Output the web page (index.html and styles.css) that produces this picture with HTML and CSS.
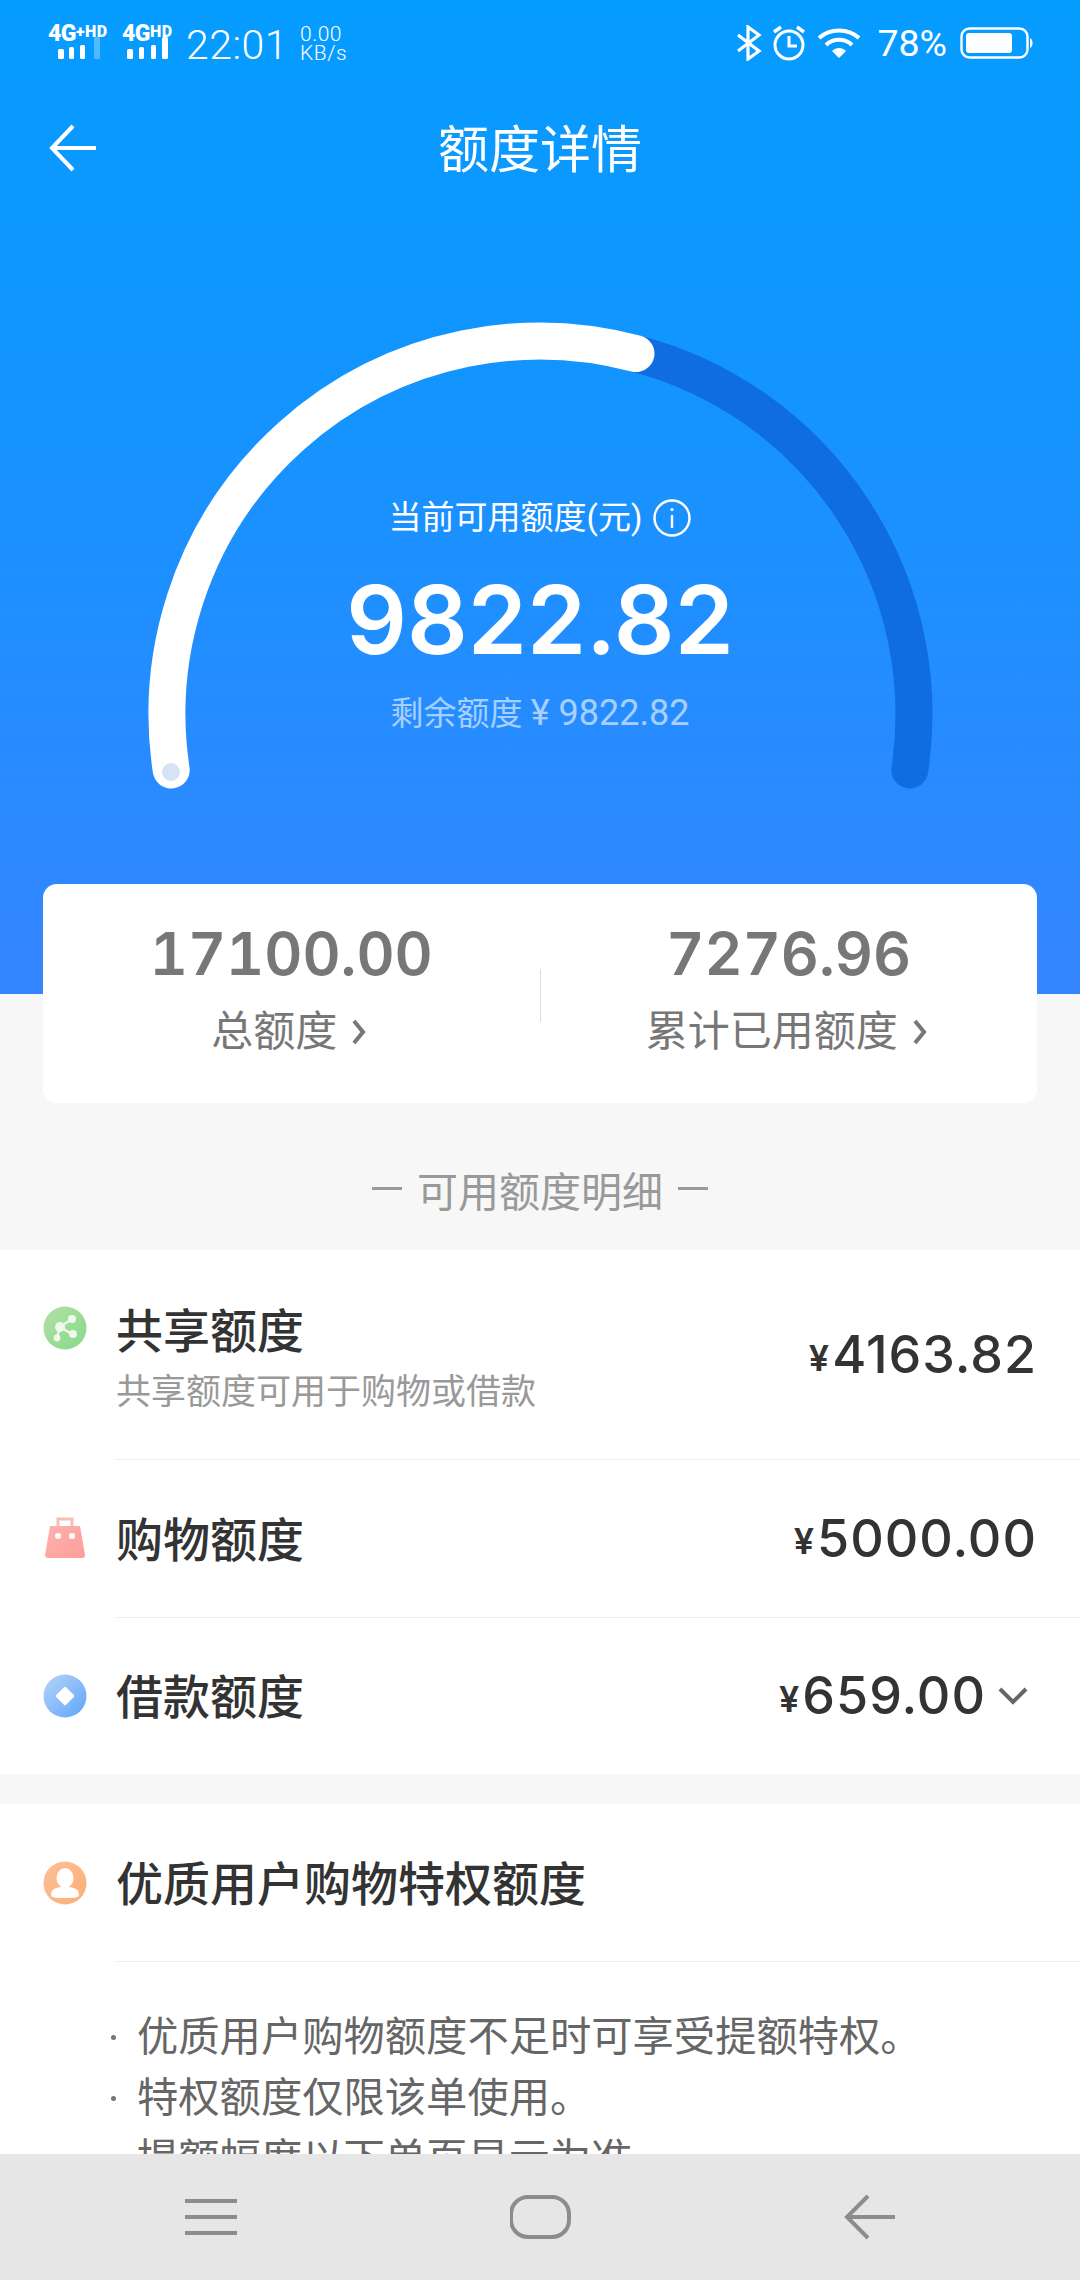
FILE: index.html
```html
<!DOCTYPE html>
<html lang="zh-CN">
<head>
    <meta charset="UTF-8">
    <meta name="viewport" content="width=device-width, initial-scale=1.0">
    <title>额度详情</title>
    <link rel="stylesheet" href="styles.css">
</head>
<body>
    <div class="screen">
        <div class="content">
            <section class="hero">
                <div class="statusbar">
                    <div class="sig sig-one">
                        <div class="sig-text">4G<small>+HD</small></div>
                        <svg class="sig-bars" width="44" height="22" viewBox="0 0 44 22">
                            <rect x="0" y="12" width="6" height="10" rx="1.5" fill="#fff"/>
                            <rect x="11" y="10" width="5" height="12" rx="1.5" fill="#fff"/>
                            <rect x="22" y="8" width="5" height="14" rx="1.5" fill="#fff"/>
                            <rect x="36" y="0" width="6" height="22" rx="1.5" fill="#fff" opacity="0.3"/>
                        </svg>
                    </div>
                    <div class="sig sig-two">
                        <div class="sig-text">4G<small>HD</small></div>
                        <svg class="sig-bars" width="42" height="22" viewBox="0 0 42 22">
                            <rect x="0" y="12" width="6" height="10" rx="1.5" fill="#fff"/>
                            <rect x="12" y="10" width="5" height="12" rx="1.5" fill="#fff"/>
                            <rect x="24" y="8" width="5" height="14" rx="1.5" fill="#fff"/>
                            <rect x="35" y="0" width="6" height="22" rx="1.5" fill="#fff"/>
                        </svg>
                    </div>
                    <span class="clock">22:01</span>
                    <div class="speed"><span>0.00</span><span>KB/s</span></div>
                    <div class="status-right">
                        <svg width="26" height="36" viewBox="0 0 26 36" fill="none" stroke="#fff" stroke-width="3.2">
                            <path d="M2 10 L23 26 L12 34 V2 L23 10 L2 26"/>
                        </svg>
                        <svg class="alarm" width="34" height="36" viewBox="0 0 34 36" fill="none" stroke="#fff" stroke-width="3">
                            <circle cx="17" cy="20" r="14"/>
                            <path d="M17 11 V21 H25"/>
                            <path d="M2 7 L9 2 M32 7 L25 2" stroke-width="3.4"/>
                        </svg>
                        <svg class="wifi" width="44" height="32" viewBox="0 0 44 32" fill="none" stroke="#fff" stroke-width="4">
                            <path d="M2 11 C13 1 31 1 42 11"/>
                            <path d="M9 18 C16 11 28 11 35 18"/>
                            <path d="M22 31 L15 24 C19 20 25 20 29 24 Z" fill="#fff" stroke="none"/>
                        </svg>
                        <span class="battery-text">78%</span>
                        <svg class="battery" width="73" height="32" viewBox="0 0 73 32">
                            <rect x="1.5" y="1.5" width="66" height="29" rx="8" fill="none" stroke="#fff" stroke-width="2.4"/>
                            <rect x="6" y="6" width="46" height="20" rx="3" fill="#fff"/>
                            <path d="M70 11 C72 12 72.5 14 72.5 16 C72.5 18 72 20 70 21 Z" fill="#fff"/>
                        </svg>
                    </div>
                </div>
                <header class="titlebar">
                    <svg class="back" width="48" height="48" viewBox="0 0 48 48" fill="none" stroke="#fff" stroke-width="4">
                        <path d="M24 2 L3 24 L24 46 M3 24 H47"/>
                    </svg>
                    <h1>额度详情</h1>
                </header>
                <div class="gauge">
                    <svg class="gauge-arc" width="820" height="500" viewBox="130 300 820 500" fill="none" stroke-width="37" stroke-linecap="round">
                        <path d="M636 353.6 A373 373 0 0 1 909.8 770" stroke="#0f6de0"/>
                        <path d="M171.2 770 A373 373 0 0 1 636 353.6" stroke="#fff"/>
                        <circle cx="171" cy="772" r="9" fill="#d5e3f2" stroke="none"/>
                    </svg>
                    <div class="gauge-label">
                        当前可用额度(元)
                        <svg width="38" height="38" viewBox="0 0 38 38" fill="none" stroke="#fff" stroke-width="2.4">
                            <circle cx="19" cy="19" r="17.5"/>
                            <path d="M19 16 V29"/>
                            <circle cx="19" cy="10.5" r="1.6" fill="#fff" stroke="none"/>
                        </svg>
                    </div>
                    <div class="gauge-value">9822.82</div>
                    <div class="gauge-sub">剩余额度 <span>¥ 9822.82</span></div>
                </div>
            </section>

            <section class="summary">
                <div class="summary-col">
                    <div class="summary-num">17100.00</div>
                    <div class="summary-label">总额度
                        <svg width="15" height="26" viewBox="0 0 15 26" fill="none" stroke="#777" stroke-width="4"><path d="M3 2 L12 13 L3 24"/></svg>
                    </div>
                </div>
                <div class="summary-line"></div>
                <div class="summary-col">
                    <div class="summary-num">7276.96</div>
                    <div class="summary-label">累计已用额度
                        <svg width="15" height="26" viewBox="0 0 15 26" fill="none" stroke="#777" stroke-width="4"><path d="M3 2 L12 13 L3 24"/></svg>
                    </div>
                </div>
            </section>

            <div class="section-title"><i></i>可用额度明细<i></i></div>

            <section class="quota-list">
                <div class="quota-row quota-first">
                    <svg class="quota-icon" width="44" height="44" viewBox="0 0 44 44">
                        <defs><linearGradient id="g1" x1="0" y1="0" x2="1" y2="1"><stop offset="0" stop-color="#b3dfa6"/><stop offset="1" stop-color="#86d98a"/></linearGradient></defs>
                        <circle cx="22" cy="22" r="21.5" fill="url(#g1)"/>
                        <path d="M29 13 L17 21 L29 28 M17 21 L14 31" stroke="#eef9ec" stroke-width="2.4" fill="none"/>
                        <circle cx="29" cy="13" r="4" fill="#eef9ec"/>
                        <circle cx="17" cy="21" r="5" fill="#eef9ec"/>
                        <circle cx="30" cy="28" r="4" fill="#eef9ec"/>
                        <circle cx="14" cy="32" r="3.4" fill="#eef9ec"/>
                    </svg>
                    <div class="quota-text">
                        <div class="quota-name">共享额度</div>
                        <div class="quota-desc">共享额度可用于购物或借款</div>
                    </div>
                    <div class="quota-amount"><small>¥</small>4163.82</div>
                </div>
                <div class="quota-row quota-second">
                    <svg class="quota-icon" width="44" height="44" viewBox="0 0 44 44">
                        <defs><linearGradient id="g2" x1="0" y1="0" x2="1" y2="1"><stop offset="0" stop-color="#fdb3ae"/><stop offset="1" stop-color="#fe9d98"/></linearGradient></defs>
                        <path d="M15 11 V3 H29 V11" fill="none" stroke="#f9bdb8" stroke-width="3"/>
                        <path d="M7 10 H37 L42 39 Q42 42 39 42 H5 Q2 42 2 39 Z" fill="url(#g2)"/>
                        <circle cx="15" cy="20" r="3" fill="#fff"/>
                        <circle cx="29" cy="20" r="3" fill="#fff"/>
                    </svg>
                    <div class="quota-text">
                        <div class="quota-name">购物额度</div>
                    </div>
                    <div class="quota-amount"><small>¥</small>5000.00</div>
                </div>
                <div class="quota-row quota-third">
                    <svg class="quota-icon" width="44" height="44" viewBox="0 0 44 44">
                        <defs><linearGradient id="g3" x1="0" y1="0" x2="1" y2="1"><stop offset="0" stop-color="#b5d4f8"/><stop offset="1" stop-color="#5fa5fb"/></linearGradient></defs>
                        <circle cx="22" cy="22" r="21.5" fill="url(#g3)"/>
                        <rect x="15" y="15" width="14" height="14" rx="1.5" transform="rotate(45 22 22)" fill="#fff"/>
                    </svg>
                    <div class="quota-text">
                        <div class="quota-name">借款额度</div>
                    </div>
                    <div class="quota-amount"><small>¥</small>659.00
                        <svg width="32" height="20" viewBox="0 0 32 20" fill="none" stroke="#666" stroke-width="4"><path d="M3 3 L16 16 L29 3"/></svg>
                    </div>
                </div>
            </section>

            <section class="privilege">
                <div class="privilege-head">
                    <svg class="quota-icon" width="44" height="44" viewBox="0 0 44 44">
                        <defs><linearGradient id="g4" x1="0" y1="0" x2="1" y2="1"><stop offset="0" stop-color="#fbbf9a"/><stop offset="1" stop-color="#fcae73"/></linearGradient></defs>
                        <circle cx="22" cy="22" r="21.5" fill="url(#g4)"/>
                        <ellipse cx="22" cy="17" rx="8.5" ry="10" fill="#fff"/>
                        <path d="M8 34 C8 27 14 26 22 26 C30 26 36 27 36 34 C36 37 30 37 22 37 C14 37 8 37 8 34 Z" fill="#fff"/>
                    </svg>
                    <h2>优质用户购物特权额度</h2>
                </div>
                <ul class="privilege-list">
                    <li>优质用户购物额度不足时可享受提额特权。</li>
                    <li>特权额度仅限该单使用。</li>
                    <li>提额幅度以下单页显示为准</li>
                </ul>
            </section>
        </div>

        <nav class="navbar">
            <svg width="54" height="40" viewBox="0 0 54 40" fill="none" stroke="#8c8c8c" stroke-width="4">
                <path d="M1 4 H53 M1 20 H53 M1 36 H53"/>
            </svg>
            <svg width="62" height="46" viewBox="0 0 62 46" fill="none" stroke="#8c8c8c" stroke-width="4">
                <rect x="1" y="3" width="58" height="40" rx="17"/>
            </svg>
            <svg width="52" height="46" viewBox="0 0 52 46" fill="none" stroke="#8c8c8c" stroke-width="4">
                <path d="M24 2 L3 23 L24 44"/>
                <path d="M3 23 H51"/>
            </svg>
        </nav>
    </div>
</body>
</html>
```

FILE: styles.css
```css
* {
    box-sizing: border-box;
}
body {
    margin: 0;
    font-family: Roboto, "Noto Sans CJK SC", sans-serif;
    background-color: #f7f7f7;
}
.screen {
    width: 1080px;
    height: 2280px;
    display: flex;
    flex-direction: column;
    overflow: hidden;
}
.content {
    height: 2154px;
    overflow: hidden;
}

/* hero */
.hero {
    height: 994px;
    background: linear-gradient(180deg, #059cff 0%, #1195ff 35%, #3585ff 100%);
    color: white;
}
.statusbar {
    height: 84px;
    display: flex;
    align-items: flex-start;
    padding: 24px 47px 0 48px;
}
.sig {
    flex: none;
}
.sig-text {
    font-size: 23px;
    line-height: 15px;
    font-weight: 900;
    letter-spacing: -0.5px;
    white-space: nowrap;
}
.sig-text small {
    font-size: 16px;
    vertical-align: 4px;
    letter-spacing: 0.5px;
}
.sig-bars {
    display: block;
    margin-top: -4px;
}
.sig-one {
    width: 74px;
}
.sig-one .sig-bars {
    margin-left: 10px;
}
.sig-two {
    width: 64px;
}
.sig-two .sig-bars {
    margin-left: 5px;
}
.clock {
    font-size: 41px;
    line-height: 40px;
    margin-top: 1px;
    font-weight: 300;
    letter-spacing: 0.5px;
    width: 114px;
}
.speed {
    display: flex;
    flex-direction: column;
    font-size: 21px;
    line-height: 19px;
    font-weight: 300;
    letter-spacing: 0.5px;
    margin-top: 1px;
}
.status-right {
    margin-left: auto;
    display: flex;
    align-items: center;
    height: 36px;
    margin-top: 1px;
}
.alarm {
    margin-left: 10px;
}
.wifi {
    margin-left: 11px;
}
.battery-text {
    font-size: 37.5px;
    margin-left: 16px;
}
.battery {
    margin-left: 13px;
}
.titlebar {
    height: 128px;
    display: flex;
    align-items: center;
    justify-content: center;
    position: relative;
    padding-bottom: 5px;
}
.titlebar h1 {
    margin: 0;
    font-size: 51px;
    font-weight: 400;
}
.back {
    position: absolute;
    left: 49px;
    top: 40px;
}
.gauge {
    margin-top: 88px;
    height: 500px;
    position: relative;
    text-align: center;
    padding-top: 196px;
}
.gauge-arc {
    position: absolute;
    left: 130px;
    top: 0;
}
.gauge-label {
    position: relative;
    height: 44px;
    font-size: 33px;
    line-height: 44px;
    display: flex;
    justify-content: center;
    align-items: center;
    gap: 11px;
}
.gauge-value {
    position: relative;
    margin-top: 25px;
    font-family: Inter, sans-serif;
    font-size: 95px;
    line-height: 110px;
    font-weight: 600;
}
.gauge-sub {
    position: relative;
    margin-top: 16px;
    font-size: 33px;
    line-height: 44px;
    color: rgba(255, 255, 255, 0.6);
}
.gauge-sub span {
    font-size: 36px;
}

/* summary card */
.summary {
    margin: -110px 43px 0;
    height: 219px;
    background-color: white;
    border-radius: 14px;
    display: flex;
    position: relative;
    padding-top: 32px;
}
.summary-col {
    flex: 1;
    text-align: center;
    color: #777;
}
.summary-num {
    font-family: Inter, sans-serif;
    font-size: 59px;
    line-height: 76px;
    font-weight: 600;
    font-feature-settings: "tnum";
}
.summary-label {
    margin-top: 12px;
    padding-right: 5px;
    font-size: 42px;
    line-height: 56px;
    display: flex;
    justify-content: center;
    align-items: center;
    gap: 14px;
}
.summary-line {
    width: 1px;
    height: 53px;
    background-color: #ddd;
    margin-top: 53px;
}
.section-title {
    height: 147px;
    display: flex;
    align-items: center;
    justify-content: center;
    gap: 15px;
    font-size: 41px;
    color: #999;
    padding-top: 24px;
}
.section-title i {
    width: 30px;
    height: 3px;
    background-color: #999;
}

/* quota rows */
.quota-list {
    background-color: white;
}
.quota-row {
    display: flex;
    padding: 0 43px 0 44px;
    position: relative;
    align-items: center;
}
.quota-row + .quota-row::before {
    content: "";
    position: absolute;
    left: 116px;
    right: 0;
    top: 0;
    height: 1px;
    background-color: #eee;
}
.quota-first {
    height: 209px;
}
.quota-second {
    height: 158px;
}
.quota-third {
    height: 157px;
}
.quota-first .quota-icon {
    align-self: flex-start;
    margin-top: 56px;
}
.quota-icon {
    flex: none;
    margin-left: -1px;
}
.quota-text {
    margin-left: 29px;
    flex: 1;
}
.quota-first .quota-text {
    align-self: flex-start;
    padding-top: 48px;
}
.quota-second .quota-text,
.quota-third .quota-text {
    padding-top: 5px;
}
.quota-name {
    font-size: 47px;
    line-height: 64px;
    font-weight: 500;
    color: #333;
}
.quota-first .quota-name {
    margin-top: 2px;
}
.quota-desc {
    font-size: 35px;
    line-height: 48px;
    margin-top: 5px;
    color: #999;
}
.quota-amount {
    display: flex;
    align-items: center;
    font-family: Inter, sans-serif;
    font-size: 52px;
    font-weight: 500;
    letter-spacing: 1px;
    color: #333;
}
.quota-amount small {
    font-size: 36px;
    font-weight: 600;
    margin-right: 2px;
    margin-top: 6px;
}
.quota-amount svg {
    margin-left: 11px;
    margin-right: 8px;
}

/* privilege */
.privilege {
    margin-top: 30px;
    background-color: white;
    height: 400px;
}
.privilege-head {
    display: flex;
    align-items: center;
    height: 158px;
    padding-left: 44px;
    position: relative;
}
.privilege-head::after {
    content: "";
    position: absolute;
    left: 116px;
    right: 0;
    bottom: 0;
    height: 1px;
    background-color: #eee;
}
.privilege-head h2 {
    margin: 0 0 5px 29px;
    font-size: 47px;
    font-weight: 500;
    color: #333;
}
.privilege-list {
    margin: 0;
    padding: 45px 0 0 137px;
    list-style: none;
    font-size: 41.3px;
    line-height: 61px;
    color: #666;
}
.privilege-list li {
    position: relative;
}
.privilege-list li::before {
    content: "";
    position: absolute;
    left: -26px;
    top: 28px;
    width: 5px;
    height: 5px;
    border-radius: 50%;
    background-color: #777;
}

/* bottom nav */
.navbar {
    height: 126px;
    background-color: #e6e6e6;
    display: flex;
    align-items: center;
    padding: 0 184px;
    justify-content: space-between;
}
```
